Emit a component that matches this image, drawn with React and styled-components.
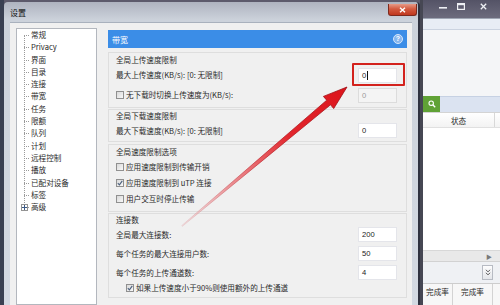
import React from 'react';
import styled, { createGlobalStyle } from 'styled-components';

const GlobalStyle = createGlobalStyle`
  html, body { margin: 0; padding: 0; }
  body {
    width: 500px; height: 305px; overflow: hidden; background: #4a4b5c;
    font-family: "Noto Sans CJK SC", "Noto Sans", sans-serif;
  }
  * { box-sizing: border-box; }
`;

const FONT = 7.6;

const Desktop = styled.div`
  position: relative;
  width: 500px;
  height: 305px;
  display: flex;
  padding-left: 4px;
  background: linear-gradient(90deg, #394052 0, #394052 4px, #5c5a6b 4px);
  overflow: hidden;
`;

/* ---------- settings dialog ---------- */
const Dialog = styled.div`
  width: 416px;
  flex-shrink: 0;
  margin-top: 2px;
  display: flex;
  flex-direction: column;
  background: linear-gradient(#aeb3bf, #ccd2db 18px, #d3d9e2);
  border-right: 2px solid #2f3240;
  border-top-left-radius: 4px;
  border-top-right-radius: 4px;
`;

const TitleBar = styled.div`
  height: 20px;
  flex-shrink: 0;
  display: flex;
  justify-content: space-between;
  align-items: flex-start;
  padding-left: 6px;
  padding-right: 1px;
`;

const TitleText = styled.span`
  font-size: 8px;
  line-height: 14px;
  padding-top: 4px;
  color: #111;
`;

const CloseBtn = styled.div`
  width: 29px;
  height: 12px;
  margin-top: 2px;
  display: flex;
  align-items: center;
  justify-content: center;
  background: linear-gradient(#e79a87, #d35a40 45%, #c0381f);
  border: 1px solid #7d2a1e;
  border-top: none;
  border-radius: 0 0 3px 3px;
`;

const Client = styled.div`
  flex: 1;
  margin: 0 6px;
  display: flex;
  gap: 11px;
  padding: 5px 5px 0 6px;
  background: #f0f0f0;
  border-top: 1px solid #a9b1bd;
`;

const Tree = styled.div`
  width: 81px;
  flex-shrink: 0;
  background: #fff;
  border: 1px solid #b3b7be;
`;

const TreeList = styled.ul`
  position: relative;
  list-style: none;
  margin: 0;
  padding: 0 0 0 14px;
  &::before {
    content: '';
    position: absolute;
    left: 7px;
    top: 6px;
    bottom: 6px;
    border-left: 1px dotted #9a9a9a;
  }
`;

const TreeItem = styled.li`
  position: relative;
  height: 12.3px;
  line-height: 12.3px;
  font-size: ${FONT}px;
  color: #2a2a2a;
  white-space: nowrap;
  &::before {
    content: '';
    position: absolute;
    left: -7px;
    width: 5px;
    top: 6px;
    border-top: 1px dotted #9a9a9a;
  }
`;

const Expander = styled.span`
  position: absolute;
  left: -10px;
  top: 2.5px;
  width: 7px;
  height: 7px;
  background: #fff;
  border: 1px solid #949494;
  display: flex;
  align-items: center;
  justify-content: center;
  z-index: 1;
`;

const Panel = styled.div`
  width: 299px;
  flex-shrink: 0;
  margin-top: 2px;
  display: flex;
  flex-direction: column;
`;

const Header = styled.div`
  height: 18px;
  flex-shrink: 0;
  display: flex;
  align-items: center;
  justify-content: space-between;
  padding: 0 4px 0 4px;
  background: #3b8de7;
  color: #fff;
  font-size: 8px;
`;

const Help = styled.span`
  width: 10px;
  height: 10px;
  border-radius: 50%;
  background: #86b6ee;
  border: 1px solid #d5e6fb;
  color: #fff;
  font-size: 7px;
  font-weight: bold;
  line-height: 8px;
  text-align: center;
  font-family: "Liberation Sans", sans-serif;
`;

const Group = styled.div`
  margin-top: ${p => p.$mt}px;
  padding: 0 9px ${p => p.$pb}px 7px;
  border: 1px solid #dedede;
  display: flex;
  flex-direction: column;
`;

const GroupLabel = styled.div`
  height: 12px;
  margin-top: ${p => p.$mt || 0}px;
  line-height: 12px;
  font-size: ${FONT}px;
  color: #2a2a2a;
  white-space: nowrap;
`;

const Row = styled.div`
  height: ${p => p.$h}px;
  margin-top: ${p => p.$mt || 0}px;
  display: flex;
  align-items: center;
  justify-content: space-between;
  padding-left: ${p => p.$indent || 0}px;
`;

const Text = styled.span`
  font-size: ${FONT}px;
  color: #2a2a2a;
  white-space: nowrap;
  line-height: 12px;
`;

const Field = styled.div`
  position: relative;
  width: 39px;
  height: 15px;
  flex-shrink: 0;
  display: flex;
  align-items: center;
  padding-left: 3px;
  font-size: ${FONT}px;
  background: ${p => (p.$disabled ? '#f4f4f4' : '#fff')};
  border: 1px solid ${p => (p.$disabled ? '#dcdcdc' : '#e4e5ea')};
  color: ${p => (p.$disabled ? '#9a9a9a' : '#222')};
  font-family: "Liberation Sans", "Noto Sans", sans-serif;
  &::after {
    content: '';
    display: ${p => (p.$highlight ? 'block' : 'none')};
    position: absolute;
    left: -7px;
    right: -9px;
    top: -6px;
    bottom: -4px;
    border: 2.5px solid #d3221d;
    border-radius: 1px;
  }
`;

const Caret = styled.span`
  width: 1px;
  height: 9px;
  margin-left: 0.5px;
  background: #111;
`;

const CheckLine = styled.div`
  display: flex;
  align-items: center;
  gap: 2px;
`;

const Box = styled.span`
  width: 8px;
  height: 8px;
  flex-shrink: 0;
  border: 1px solid #909090;
  background: linear-gradient(135deg, #d9d9d9, #f8f8f8);
  display: flex;
  align-items: center;
  justify-content: center;
`;

/* ---------- background window ---------- */
const BgWindow = styled.div`
  flex: 1;
  display: flex;
  flex-direction: column;
  border-left: 3px solid #464753;
  background: #fff;
`;

const BgTitle = styled.div`
  height: 18px;
  flex-shrink: 0;
  display: flex;
  justify-content: flex-end;
  padding-right: 3px;
  background: linear-gradient(#545366, #6c6b7d);
`;

const WinBtn = styled.div`
  width: ${p => p.$w}px;
  height: 12px;
  display: flex;
  align-items: center;
  justify-content: center;
`;

const BgBand = styled.div`
  height: 12px;
  flex-shrink: 0;
  background: #e8edf5;
  border-top: 1px solid #9ea5b3;
  border-bottom: 1px solid #cbd3e0;
`;

const BgTool = styled.div`
  height: 66px;
  flex-shrink: 0;
  background: #f4f5f7;
`;

const BgSearch = styled.div`
  height: 16px;
  flex-shrink: 0;
  display: flex;
`;

const GreenBtn = styled.div`
  width: 17px;
  background: #60a236;
  display: flex;
  align-items: center;
  justify-content: center;
`;

const SearchField = styled.div`
  flex: 1;
  background: #dbe3f1;
  border-top: 1px solid #c6d1e3;
`;

const BgHeader = styled.div`
  height: 16px;
  flex-shrink: 0;
  display: flex;
  background: linear-gradient(#ffffff, #f3f3f3);
  border-top: 1px solid #d4d4d4;
  border-bottom: 1px solid #e0e0e0;
`;

const HeaderCell = styled.div`
  width: 72px;
  display: flex;
  align-items: center;
  justify-content: center;
  font-size: ${FONT}px;
  color: #2a2a2a;
  border-right: 1px solid #d8d8d8;
`;

const BgList = styled.div`
  flex: 1;
  background: #fff;
`;

const BgScroll = styled.div`
  height: 11px;
  flex-shrink: 0;
  display: flex;
  justify-content: flex-end;
  align-items: center;
  padding-right: 8px;
  background: #e9e9e9;
  border-top: 1px solid #d8d8d8;
  color: #7a7a7a;
  font-size: 6px;
`;

const BgBar = styled.div`
  height: 22px;
  flex-shrink: 0;
  display: flex;
  justify-content: flex-end;
  align-items: center;
  padding-right: 7px;
  background: #eff1f4;
  border-top: 1px solid #d2d2d2;
`;

const DropBtn = styled.div`
  width: 11px;
  height: 15px;
  display: flex;
  align-items: center;
  justify-content: center;
  border: 1px solid #b7bbc3;
  background: linear-gradient(#fdfdfd, #e4e6ea);
`;

const BgTabs = styled.div`
  height: 22px;
  flex-shrink: 0;
  display: flex;
  background: #f7f7f7;
  border-top: 1px solid #cdcdcd;
`;

const Tab = styled.div`
  width: ${p => p.$w}px;
  padding-top: 2px;
  text-align: center;
  font-size: ${FONT}px;
  line-height: 12px;
  color: #2a2a2a;
  border-right: 1px solid #d3d3d3;
`;

const Overlay = styled.svg`
  position: absolute;
  left: 0;
  top: 0;
  pointer-events: none;
`;

/* ---------- pieces ---------- */
const Check = ({ checked }) => (
  <Box>
    {checked && (
      <svg width="6" height="6" viewBox="0 0 6 6">
        <path d="M0.8 3.2 L2.4 4.8 L5.3 0.9" fill="none" stroke="#4b5f7c" strokeWidth="1.1" />
      </svg>
    )}
  </Box>
);

const CheckRow = ({ h, mt, indent, checked, children }) => (
  <Row $h={h} $mt={mt} $indent={indent}>
    <CheckLine>
      <Check checked={checked} />
      <Text>{children}</Text>
    </CheckLine>
  </Row>
);

const treeItems = ['常规', 'Privacy', '界面', '目录', '连接', '带宽', '任务', '限额', '队列', '计划', '远程控制', '播放', '已配对设备', '标签'];

export default function App() {
  return (
    <>
      <GlobalStyle />
      <Desktop>
        <Dialog>
          <TitleBar>
            <TitleText>设置</TitleText>
            <CloseBtn>
              <svg width="7" height="6" viewBox="0 0 7 6">
                <path d="M1 0.8 L6 5.2 M6 0.8 L1 5.2" stroke="#fff" strokeWidth="1.4" />
              </svg>
            </CloseBtn>
          </TitleBar>
          <Client>
            <Tree>
              <TreeList>
                {treeItems.map(t => (
                  <TreeItem key={t}>{t}</TreeItem>
                ))}
                <TreeItem>
                  <Expander>
                    <svg width="5" height="5" viewBox="0 0 5 5">
                      <path d="M0 2.5 H5 M2.5 0 V5" stroke="#3b5a86" strokeWidth="1" />
                    </svg>
                  </Expander>
                  高级
                </TreeItem>
              </TreeList>
            </Tree>
            <Panel>
              <Header>
                <span>带宽</span>
                <Help>?</Help>
              </Header>

              <Group $mt={4} $pb={4}>
                <GroupLabel $mt={1}>全局上传速度限制</GroupLabel>
                <Row $h={16} $mt={1}>
                  <Text>最大上传速度(KB/s): [0: 无限制]</Text>
                  <Field $highlight>
                    0<Caret />
                  </Field>
                </Row>
                <Row $h={16} $mt={4}>
                  <CheckLine>
                    <Check />
                    <Text>无下载时切换上传速度为(KB/s):</Text>
                  </CheckLine>
                  <Field $disabled>0</Field>
                </Row>
              </Group>

              <Group $mt={1} $pb={3}>
                <GroupLabel>全局下载速度限制</GroupLabel>
                <Row $h={15} $mt={1}>
                  <Text>最大下载速度(KB/s): [0: 无限制]</Text>
                  <Field>0</Field>
                </Row>
              </Group>

              <Group $mt={2} $pb={4}>
                <GroupLabel $mt={1}>全局速度限制选项</GroupLabel>
                <CheckRow h={16} mt={1}>应用速度限制到传输开销</CheckRow>
                <CheckRow h={16} checked>应用速度限制到 uTP 连接</CheckRow>
                <CheckRow h={16}>用户交互时停止传输</CheckRow>
              </Group>

              <Group $mt={1} $pb={2}>
                <GroupLabel>连接数</GroupLabel>
                <Row $h={15} $mt={1}>
                  <Text>全局最大连接数:</Text>
                  <Field>200</Field>
                </Row>
                <Row $h={15} $mt={4}>
                  <Text>每个任务的最大连接用户数:</Text>
                  <Field>50</Field>
                </Row>
                <Row $h={15} $mt={4}>
                  <Text>每个任务的上传通道数:</Text>
                  <Field>4</Field>
                </Row>
                <CheckRow h={14} mt={1} indent={10} checked>
                  如果上传速度小于90%则使用额外的上传通道
                </CheckRow>
              </Group>
            </Panel>
          </Client>
        </Dialog>

        <BgWindow>
          <BgTitle>
            <WinBtn $w={18}>
              <svg width="8" height="6" viewBox="0 0 8 6">
                <rect x="0" y="4" width="8" height="1.6" fill="#eef0f4" />
              </svg>
            </WinBtn>
            <WinBtn $w={18}>
              <svg width="8" height="7" viewBox="0 0 8 7">
                <rect x="0.6" y="0.6" width="6.8" height="5.8" fill="none" stroke="#eef0f4" strokeWidth="1.2" />
                <rect x="0.6" y="0.6" width="6.8" height="1.6" fill="#eef0f4" />
              </svg>
            </WinBtn>
            <WinBtn $w={27}>
              <svg width="7" height="7" viewBox="0 0 7 7">
                <path d="M0.8 0.8 L6.2 6.2 M6.2 0.8 L0.8 6.2" stroke="#eef0f4" strokeWidth="1.3" />
              </svg>
            </WinBtn>
          </BgTitle>
          <BgBand />
          <BgTool />
          <BgSearch>
            <GreenBtn>
              <svg width="8" height="8" viewBox="0 0 8 8">
                <circle cx="3.2" cy="3.2" r="2.2" fill="none" stroke="#fff" strokeWidth="1.1" />
                <path d="M4.8 4.8 L7.2 7.2" stroke="#fff" strokeWidth="1.4" />
              </svg>
            </GreenBtn>
            <SearchField />
          </BgSearch>
          <BgHeader>
            <HeaderCell>状态</HeaderCell>
          </BgHeader>
          <BgList />
          <BgScroll>▶</BgScroll>
          <BgBar>
            <DropBtn>
              <svg width="6" height="7" viewBox="0 0 6 7">
                <path d="M0.8 0.8 L3 2.8 L5.2 0.8 M0.8 3.8 L3 5.8 L5.2 3.8" fill="none" stroke="#555" strokeWidth="0.9" />
              </svg>
            </DropBtn>
          </BgBar>
          <BgTabs>
            <Tab $w={30}>完成率</Tab>
            <Tab $w={40}>完成率</Tab>
          </BgTabs>
        </BgWindow>

        <Overlay width="500" height="305" viewBox="0 0 500 305">
          <defs>
            <linearGradient id="arrowFill" gradientUnits="userSpaceOnUse" x1="182" y1="226" x2="347" y2="87">
              <stop offset="0" stopColor="#f0b6ba" stopOpacity="0.35" />
              <stop offset="0.3" stopColor="#ea7b80" stopOpacity="0.85" />
              <stop offset="0.65" stopColor="#e2262d" />
              <stop offset="1" stopColor="#dc141b" />
            </linearGradient>
            <linearGradient id="arrowEdge" gradientUnits="userSpaceOnUse" x1="182" y1="226" x2="347" y2="87">
              <stop offset="0" stopColor="#c9868a" stopOpacity="0.2" />
              <stop offset="0.5" stopColor="#b51219" stopOpacity="0.8" />
              <stop offset="1" stopColor="#9c0a10" />
            </linearGradient>
          </defs>
          <polygon
            points="181.7,225.6 326.7,100.2 323.4,96.4 347,87 333.7,108.6 330.5,104.8 182.3,226.4"
            fill="url(#arrowFill)"
            stroke="url(#arrowEdge)"
            strokeWidth="0.8"
            strokeLinejoin="round"
          />
        </Overlay>
      </Desktop>
    </>
  );
}
